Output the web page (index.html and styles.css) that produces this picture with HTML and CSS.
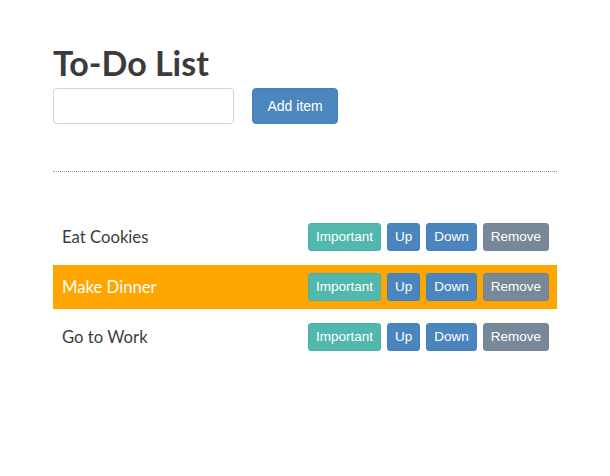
FILE: index.html
```html
<!DOCTYPE html>
<html>
<head>
<meta charset="utf-8">
<link rel="stylesheet" href="styles.css">
</head>
<body>
<div class="container">
  <h1 class="title">To-Do List</h1>
  <div class="add-row">
    <input class="add-input" type="text">
    <button class="btn btn-add">Add item</button>
  </div>
  <hr class="divider">
  <ul class="todo-list">
    <li class="todo">
      <span class="todo-text">Eat Cookies</span>
      <div class="actions">
        <button class="btn btn-sm btn-important">Important</button>
        <button class="btn btn-sm btn-move">Up</button>
        <button class="btn btn-sm btn-move">Down</button>
        <button class="btn btn-sm btn-remove">Remove</button>
      </div>
    </li>
    <li class="todo important">
      <span class="todo-text">Make Dinner</span>
      <div class="actions">
        <button class="btn btn-sm btn-important">Important</button>
        <button class="btn btn-sm btn-move">Up</button>
        <button class="btn btn-sm btn-move">Down</button>
        <button class="btn btn-sm btn-remove">Remove</button>
      </div>
    </li>
    <li class="todo">
      <span class="todo-text">Go to Work</span>
      <div class="actions">
        <button class="btn btn-sm btn-important">Important</button>
        <button class="btn btn-sm btn-move">Up</button>
        <button class="btn btn-sm btn-move">Down</button>
        <button class="btn btn-sm btn-remove">Remove</button>
      </div>
    </li>
  </ul>
</div>
</body>
</html>
```

FILE: styles.css
```css
html, body {
  margin: 0;
  padding: 0;
  background: #fff;
}
body {
  font-family: Lato, "Open Sans", sans-serif;
  color: #333;
}
.container {
  width: 504px;
  margin-left: 53px;
  padding-top: 43px;
}
.title {
  margin: 0;
  font-family: Lato, sans-serif;
  font-weight: 700;
  font-size: 34px;
  line-height: 39px;
  color: #3b3b3b;
}
.add-row {
  display: flex;
  align-items: center;
  gap: 18px;
  margin-top: 6px;
}
.add-input {
  box-sizing: border-box;
  width: 181px;
  height: 36px;
  border: 1px solid #d4d4d4;
  border-radius: 4px;
  padding: 0 10px;
  margin: 0;
  font-size: 14px;
}
.btn {
  box-sizing: border-box;
  font-family: "Liberation Sans", Arial, sans-serif;
  color: #fff;
  border: 1px solid transparent;
  border-radius: 4px;
  margin: 0;
  cursor: pointer;
}
.btn-add {
  height: 36px;
  padding: 0 14.5px;
  font-size: 14px;
  line-height: 20px;
  background: #4b87bd;
  border-color: #4580b6;
}
.divider {
  margin: 47px 0 0 0;
  border: 0;
  border-top: 1px dotted #9a9a9a;
  height: 0;
}
.todo-list {
  list-style: none;
  margin: 43px 0 0 0;
  padding: 0;
  display: flex;
  flex-direction: column;
  gap: 6px;
}
.todo {
  height: 44px;
  display: flex;
  align-items: center;
  justify-content: space-between;
  padding: 0 8px 0 9px;
}
.todo.important {
  background: #ffa500;
}
.todo-text {
  font-size: 16.7px;
  color: #3d3d3d;
}
.todo.important .todo-text {
  color: #fff;
}
.actions {
  display: flex;
  gap: 6px;
}
.btn-sm {
  height: 28px;
  padding: 0 7px;
  font-size: 13.5px;
  line-height: 18px;
  border-radius: 3px;
}
.btn-important {
  background: #52b7ad;
  border-color: #4cb0a6;
}
.btn-move {
  background: #4a86bd;
  border-color: #4580b6;
}
.btn-remove {
  background: #778899;
  border-color: #718294;
}
```
